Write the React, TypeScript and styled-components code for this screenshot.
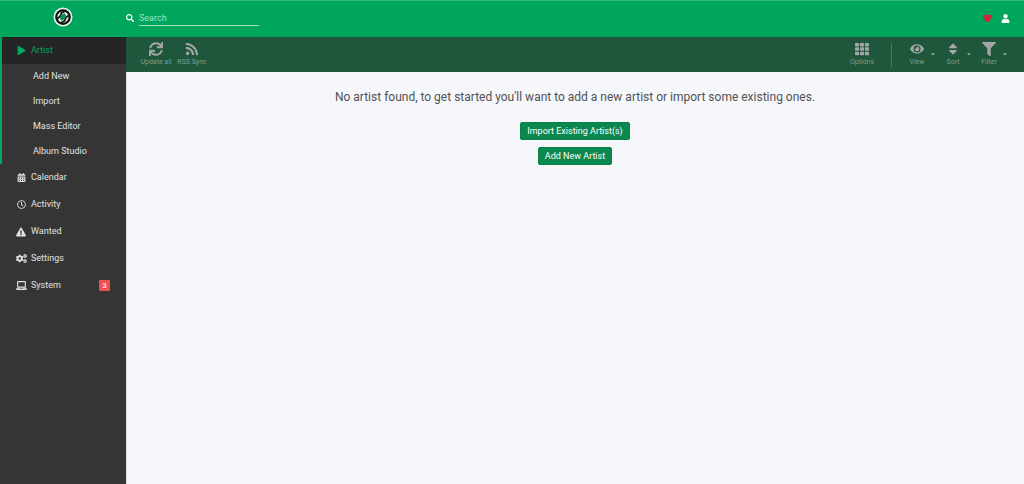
import React from "react";
import styled, { createGlobalStyle } from "styled-components";
import type { IconType } from "react-icons";
import {
  FaCalendarAlt,
  FaCaretDown,
  FaCogs,
  FaExclamationTriangle,
  FaEye,
  FaFilter,
  FaHeart,
  FaLaptop,
  FaPlay,
  FaRegClock,
  FaRss,
  FaSearch,
  FaSort,
  FaSync,
  FaTh,
  FaUser,
} from "react-icons/fa";

const GlobalStyle = createGlobalStyle`
  *, *::before, *::after { box-sizing: border-box; }
  body {
    margin: 0;
    background: #f5f7fb;
    color: #515253;
    font-family: Roboto, "Liberation Sans", sans-serif;
    font-size: 9px;
    line-height: 13px;
  }
  a { color: inherit; text-decoration: none; }
  button, input { font: inherit; }
`;

const Page = styled.div`
  display: flex;
  flex-direction: column;
  min-height: 100vh;
`;

const Header = styled.header`
  display: flex;
  align-items: center;
  height: 37px;
  border-top: 1px solid #35b878;
  background: #00a65b;
  color: #fff;
`;

const LogoLink = styled.a`
  display: flex;
  justify-content: center;
  flex: 0 0 126px;
  padding-bottom: 4px;

  svg { display: block; }
`;

const SearchForm = styled.form`
  display: flex;
  align-items: center;
  gap: 5px;
  padding-bottom: 2px;

  label { display: flex; }
`;

const SearchInput = styled.input`
  width: 120px;
  height: 16px;
  padding: 1px 0 0;
  border: 0;
  border-bottom: 1px solid #a6dfc3;
  border-radius: 0;
  outline: 0;
  background: transparent;
  color: #fff;

  &::placeholder { color: #9fe0be; opacity: 1; }
`;

const HeaderActions = styled.div`
  display: flex;
  align-items: center;
  gap: 9px;
  margin-left: auto;
  padding: 0 14px 2px 0;
`;

const HeaderLink = styled.a<{ $color: string }>`
  display: flex;
  color: ${(p) => p.$color};
`;

const Body = styled.div`
  display: flex;
  flex: 1;
`;

const Sidebar = styled.nav`
  flex: 0 0 126px;
  background: #353535;
  box-shadow: 1px 0 0 #d8dadd;
  color: #e1e2e3;
`;

const ActiveGroup = styled.div`
  border-left: 2px solid #00a65b;
`;

const NavLink = styled.a<{ $active?: boolean; $inGroup?: boolean }>`
  display: flex;
  align-items: center;
  gap: 4px;
  height: 27px;
  padding: 0 16px 0 ${(p) => (p.$inGroup ? 13 : 15)}px;
  background: ${(p) => (p.$active ? "#252525" : "transparent")};
  color: ${(p) => (p.$active ? "#00a65b" : "inherit")};
`;

const NavIcon = styled.span`
  display: flex;
  justify-content: center;
  width: 12px;

  svg { flex: none; }
`;

const SubLink = styled.a`
  display: flex;
  align-items: center;
  height: 25px;
  padding-left: 31px;
`;

const Badge = styled.span`
  min-width: 11px;
  margin-left: auto;
  padding: 0 3px;
  border-radius: 1px;
  background: #f05050;
  color: #fff;
  font-size: 8px;
  line-height: 11px;
  text-align: center;
`;

const Content = styled.div`
  flex: 1;
  min-width: 0;
`;

const Toolbar = styled.div`
  display: flex;
  justify-content: space-between;
  height: 35px;
  padding: 0 17px 0 12px;
  background: #1f573c;
`;

const ToolbarSection = styled.div`
  display: flex;
`;

const ToolButton = styled.button`
  position: relative;
  display: flex;
  flex-direction: column;
  align-items: center;
  gap: 1px;
  width: 36px;
  padding: 5px 0 0;
  border: 0;
  background: none;
  color: #a3a6a4;
  cursor: pointer;
`;

const ToolLabel = styled.span`
  color: #799f8c;
  font-size: 7px;
  line-height: 10px;
  white-space: nowrap;
`;

const MenuCaret = styled(FaCaretDown)`
  position: absolute;
  top: 14px;
  right: -1px;
`;

const Separator = styled.div`
  width: 1px;
  height: 24px;
  margin: 6px 7px 0 11px;
  background: #4a7560;
`;

const EmptyState = styled.main`
  display: flex;
  flex-direction: column;
  align-items: center;
  gap: 7px;
  padding: 17px 12px;
`;

const Message = styled.p`
  margin: 0 0 10px;
  font-size: 12px;
  line-height: 16px;
  text-align: center;
`;

const PrimaryLink = styled.a`
  padding: 2px 6px;
  border: 1px solid #0a8148;
  border-radius: 2px;
  background: #0b8750;
  color: #fff;
  line-height: 12px;
`;

const Logo = () => (
  <svg width="20" height="20" viewBox="0 0 40 40" aria-hidden="true">
    <circle cx="20" cy="20" r="19" fill="#e8f3ed" />
    <circle cx="20" cy="20" r="13.5" fill="#e8f3ed" stroke="#111" strokeWidth="4.5" />
    <path d="M24 8 17 12 14 19 9 23M16 32 23 28 26 21 31 17" fill="none" stroke="#111" strokeWidth="3.5" />
    <path d="M23 12 15 17 14 23 17 28 25 23 26 17Z" fill="#0b8f50" />
  </svg>
);

const pages: { label: string; icon: IconType; size: number; badge?: number }[] = [
  { label: "Calendar", icon: FaCalendarAlt, size: 9 },
  { label: "Activity", icon: FaRegClock, size: 9 },
  { label: "Wanted", icon: FaExclamationTriangle, size: 10 },
  { label: "Settings", icon: FaCogs, size: 11 },
  { label: "System", icon: FaLaptop, size: 11, badge: 3 },
];

const artistPages = ["Add New", "Import", "Mass Editor", "Album Studio"];

const Tool = ({ icon: Icon, label, menu }: { icon: IconType; label: string; menu?: boolean }) => (
  <ToolButton type="button" aria-haspopup={menu ? "menu" : undefined}>
    <Icon size={14} />
    <ToolLabel>{label}</ToolLabel>
    {menu && <MenuCaret size={6} />}
  </ToolButton>
);

export default function App() {
  return (
    <Page>
      <GlobalStyle />
      <Header>
        <LogoLink href="#home" aria-label="Home">
          <Logo />
        </LogoLink>
        <SearchForm role="search">
          <label htmlFor="search" aria-label="Search">
            <FaSearch size={8} />
          </label>
          <SearchInput id="search" type="text" placeholder="Search" />
        </SearchForm>
        <HeaderActions>
          <HeaderLink href="#donate" aria-label="Donate" $color="#c8293c">
            <FaHeart size={9} />
          </HeaderLink>
          <HeaderLink href="#account" aria-label="Account" $color="#fff">
            <FaUser size={9} />
          </HeaderLink>
        </HeaderActions>
      </Header>
      <Body>
        <Sidebar>
          <ActiveGroup>
            <NavLink href="#artist" $active $inGroup>
              <NavIcon>
                <FaPlay size={9} />
              </NavIcon>
              Artist
            </NavLink>
            {artistPages.map((label) => (
              <SubLink key={label} href="#artist">
                {label}
              </SubLink>
            ))}
          </ActiveGroup>
          {pages.map(({ label, icon: Icon, size, badge }) => (
            <NavLink key={label} href="#page">
              <NavIcon>
                <Icon size={size} />
              </NavIcon>
              {label}
              {badge && <Badge>{badge}</Badge>}
            </NavLink>
          ))}
        </Sidebar>
        <Content>
          <Toolbar>
            <ToolbarSection>
              <Tool icon={FaSync} label="Update all" />
              <Tool icon={FaRss} label="RSS Sync" />
            </ToolbarSection>
            <ToolbarSection>
              <Tool icon={FaTh} label="Options" />
              <Separator />
              <Tool icon={FaEye} label="View" menu />
              <Tool icon={FaSort} label="Sort" menu />
              <Tool icon={FaFilter} label="Filter" menu />
            </ToolbarSection>
          </Toolbar>
          <EmptyState>
            <Message>
              No artist found, to get started you'll want to add a new artist or import some existing ones.
            </Message>
            <PrimaryLink href="#import">Import Existing Artist(s)</PrimaryLink>
            <PrimaryLink href="#add">Add New Artist</PrimaryLink>
          </EmptyState>
        </Content>
      </Body>
    </Page>
  );
}
